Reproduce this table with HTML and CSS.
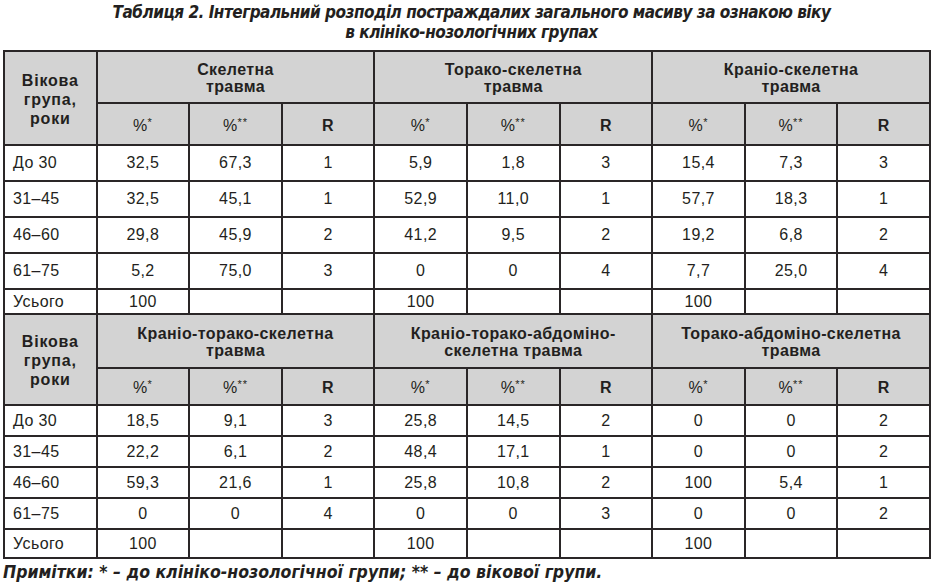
FILE: index.html
```html
<!DOCTYPE html>
<html lang="uk">
<head>
<meta charset="utf-8">
<title>Таблиця 2</title>
<link rel="stylesheet" href="styles.css">
</head>
<body>
<div class="page">
  <h1 class="title">Таблиця 2. Інтегральний розподіл постраждалих загального масиву за ознакою віку<br>в клініко-нозологічних групах</h1>
  <table class="data">
    <colgroup>
      <col><col><col><col><col><col><col><col><col><col>
    </colgroup>
    <tbody>
      <tr class="h1 b1">
        <th rowspan="2" class="age">Вікова<br>група,<br>роки</th>
        <th colspan="3">Скелетна<br>травма</th>
        <th colspan="3">Торако-скелетна<br>травма</th>
        <th colspan="3">Краніо-скелетна<br>травма</th>
      </tr>
      <tr class="h2 b1">
        <th class="pc">%<sup>*</sup></th><th class="pc">%<sup>**</sup></th><th>R</th>
        <th class="pc">%<sup>*</sup></th><th class="pc">%<sup>**</sup></th><th>R</th>
        <th class="pc">%<sup>*</sup></th><th class="pc">%<sup>**</sup></th><th>R</th>
      </tr>
      <tr class="r1"><td class="lbl">До 30</td><td>32,5</td><td>67,3</td><td>1</td><td>5,9</td><td>1,8</td><td>3</td><td>15,4</td><td>7,3</td><td>3</td></tr>
      <tr class="r1"><td class="lbl">31–45</td><td>32,5</td><td>45,1</td><td>1</td><td>52,9</td><td>11,0</td><td>1</td><td>57,7</td><td>18,3</td><td>1</td></tr>
      <tr class="r1"><td class="lbl">46–60</td><td>29,8</td><td>45,9</td><td>2</td><td>41,2</td><td>9,5</td><td>2</td><td>19,2</td><td>6,8</td><td>2</td></tr>
      <tr class="r1"><td class="lbl">61–75</td><td>5,2</td><td>75,0</td><td>3</td><td>0</td><td>0</td><td>4</td><td>7,7</td><td>25,0</td><td>4</td></tr>
      <tr class="t1"><td class="lbl">Усього</td><td>100</td><td></td><td></td><td>100</td><td></td><td></td><td>100</td><td></td><td></td></tr>
      <tr class="h1 b2">
        <th rowspan="2" class="age">Вікова<br>група,<br>роки</th>
        <th colspan="3">Краніо-торако-скелетна<br>травма</th>
        <th colspan="3">Краніо-торако-абдоміно-<br>скелетна травма</th>
        <th colspan="3">Торако-абдоміно-скелетна<br>травма</th>
      </tr>
      <tr class="h2 b2">
        <th class="pc">%<sup>*</sup></th><th class="pc">%<sup>**</sup></th><th>R</th>
        <th class="pc">%<sup>*</sup></th><th class="pc">%<sup>**</sup></th><th>R</th>
        <th class="pc">%<sup>*</sup></th><th class="pc">%<sup>**</sup></th><th>R</th>
      </tr>
      <tr class="r2"><td class="lbl">До 30</td><td>18,5</td><td>9,1</td><td>3</td><td>25,8</td><td>14,5</td><td>2</td><td>0</td><td>0</td><td>2</td></tr>
      <tr class="r2"><td class="lbl">31–45</td><td>22,2</td><td>6,1</td><td>2</td><td>48,4</td><td>17,1</td><td>1</td><td>0</td><td>0</td><td>2</td></tr>
      <tr class="r2"><td class="lbl">46–60</td><td>59,3</td><td>21,6</td><td>1</td><td>25,8</td><td>10,8</td><td>2</td><td>100</td><td>5,4</td><td>1</td></tr>
      <tr class="r2"><td class="lbl">61–75</td><td>0</td><td>0</td><td>4</td><td>0</td><td>0</td><td>3</td><td>0</td><td>0</td><td>2</td></tr>
      <tr class="t2"><td class="lbl">Усього</td><td>100</td><td></td><td></td><td>100</td><td></td><td></td><td>100</td><td></td><td></td></tr>
    </tbody>
  </table>
  <p class="note"><b>Примітки:</b> * – до клініко-нозологічної групи; ** – до вікової групи.</p>
</div>
</body>
</html>
```
FILE: styles.css
```css
html, body {
  margin: 0;
  padding: 0;
  background: #ffffff;
}
.page {
  width: 931px;
  color: #231f20;
  font-family: "Liberation Sans", Arial, sans-serif;
}
.title {
  margin: 0;
  padding: 2px 0 0 12px;
  height: 50px;
  box-sizing: border-box;
  text-align: center;
  font-family: "DejaVu Sans Condensed", "Liberation Sans", sans-serif;
  font-style: italic;
  font-weight: bold;
  font-size: 17px;
  letter-spacing: -0.5px;
  line-height: 20px;
  color: #231f20;
}
.data {
  margin-left: 3px;
  width: 926px;
  table-layout: fixed;
  border-collapse: collapse;
  font-size: 16px;
  letter-spacing: 0.4px;
}
.data col {
  width: 92.6px;
}
.data th,
.data td {
  border: 2px solid #2a2627;
  padding: 0;
  text-align: center;
  vertical-align: middle;
}
.data th {
  background: #d3d3d3;
  font-weight: bold;
  line-height: 17px;
  padding-top: 2px;
}
.data th.age {
  line-height: 19px;
  letter-spacing: 0.8px;
}
.data th.pc {
  font-weight: normal;
}
.data sup {
  font-size: 11px;
  vertical-align: 5px;
  line-height: 0;
  letter-spacing: 1px;
}
.data td.lbl {
  text-align: left;
  padding-left: 8px;
}
.h1.b1 { height: 52px; }
.h2.b1 { height: 42px; }
.r1 { height: 36px; }
.t1 { height: 25px; }
.h1.b2 { height: 54px; }
.h2.b2 { height: 37px; }
.r2 { height: 31px; }
.t2 { height: 29px; }
.note {
  margin: 3px 0 0 3px;
  font-family: "DejaVu Sans Condensed", "Liberation Sans", sans-serif;
  font-style: italic;
  font-weight: bold;
  font-size: 17.5px;
  line-height: 20px;
  color: #231f20;
}
.note b {
  font-weight: bold;
}
```
